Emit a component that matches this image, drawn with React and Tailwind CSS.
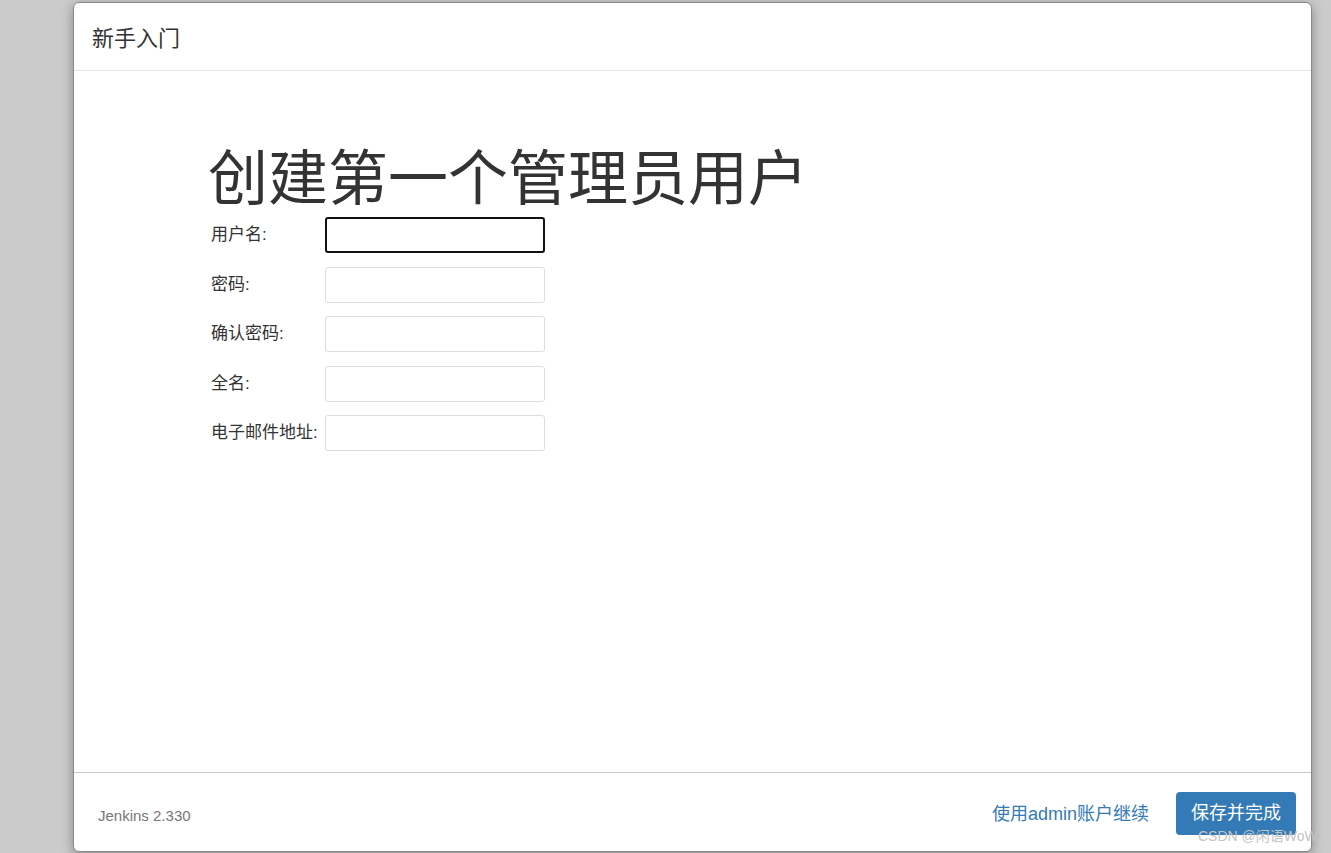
import { useState } from 'react';

const fields = ['用户名:', '密码:', '确认密码:', '全名:', '电子邮件地址:'];

export default function App() {
  const [values, setValues] = useState(fields.map(() => ''));

  return (
    <div
      className="relative w-full h-[853px] bg-[#cbcbcb] pl-[73px] pr-[19px] pt-[2px] pb-[1px] overflow-hidden"
      style={{ fontFamily: '"Liberation Sans", "Noto Sans CJK SC", sans-serif' }}
    >
      <div className="h-full flex flex-col bg-white border border-[#8a8a8a] rounded-md shadow-[0_3px_12px_rgba(0,0,0,0.35)]">
        {/* header */}
        <div className="h-[68px] shrink-0 flex items-center pl-[18px] border-b border-[#e5e5e5]">
          <h4 className="text-[22px] text-[#333] pt-[4px]">新手入门</h4>
        </div>

        {/* body */}
        <div className="flex-1 pl-[137px] pt-[76px]">
          <h1 className="text-[60px] leading-[66px] text-[#333] mb-[4px] ml-[-3px]">创建第一个管理员用户</h1>
          <div className="flex flex-col gap-[13.5px]">
            {fields.map((f, i) => (
              <div key={f} className="flex items-center">
                <label className="w-[114px] text-[17px] text-[#333] whitespace-nowrap">{f}</label>
                <input
                  autoFocus={i === 0}
                  type={i === 1 || i === 2 ? 'password' : 'text'}
                  value={values[i]}
                  onChange={(e) => setValues(values.map((v, j) => (j === i ? e.target.value : v)))}
                  className={`w-[220px] h-[36px] rounded-[3px] px-[10px] outline-none caret-[#333] ${
                    i === 0 ? 'border-2 border-[#111]' : 'border border-[#ddd]'
                  }`}
                />
              </div>
            ))}
          </div>
        </div>

        {/* footer */}
        <div className="h-[79px] shrink-0 flex items-center justify-between border-t border-[#c6c6c6] pl-[24px] pr-[15px]">
          <span className="text-[15px] text-[#777] pt-[9px]">Jenkins 2.330</span>
          <div className="flex items-center gap-[27px] pt-[2px]">
            <a href="#" className="text-[18px] text-[#337ab7] pt-[2px]">使用admin账户继续</a>
            <button className="w-[120px] h-[43px] rounded-[4px] bg-[#337ab7] text-white text-[18px]">保存并完成</button>
          </div>
        </div>
      </div>

      <span className="absolute left-[1198px] top-[826px] text-[14px] text-[#c4c4c4] whitespace-nowrap">CSDN @闲语WoW</span>
    </div>
  );
}
